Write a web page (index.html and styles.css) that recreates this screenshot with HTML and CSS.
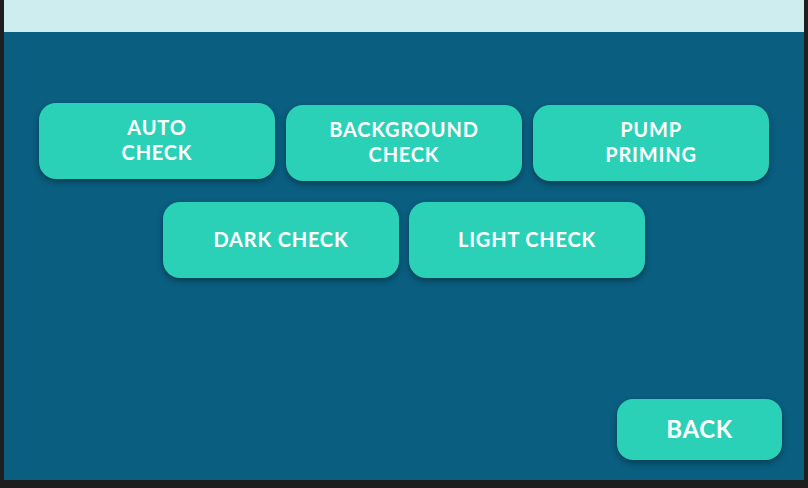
FILE: index.html
```html
<!DOCTYPE html>
<html>
<head>
<meta charset="utf-8">
<link rel="stylesheet" href="styles.css">
</head>
<body>
<div class="screen">
  <div class="topbar"></div>
  <div class="main">
    <div class="row row-top">
      <button class="btn btn-raised">AUTO<br>CHECK</button>
      <button class="btn">BACKGROUND<br>CHECK</button>
      <button class="btn">PUMP<br>PRIMING</button>
    </div>
    <div class="row row-second">
      <button class="btn">DARK CHECK</button>
      <button class="btn">LIGHT CHECK</button>
    </div>
    <div class="footer">
      <button class="btn btn-back">BACK</button>
    </div>
  </div>
</div>
</body>
</html>
```
FILE: styles.css
```css
html, body {
  margin: 0;
  padding: 0;
  background: #1e1e1e;
  width: 808px;
  height: 488px;
  overflow: hidden;
}
.screen {
  margin-left: 4px;
  width: 800px;
  height: 480px;
  display: flex;
  flex-direction: column;
}
.topbar {
  height: 32px;
  background: #ceedef;
}
.main {
  flex: 1;
  background: #0a5e80;
  display: flex;
  flex-direction: column;
  padding-top: 71px;
}
.row {
  display: flex;
  justify-content: center;
  align-items: flex-end;
}
.row-top {
  gap: 11px;
}
.row-second {
  gap: 10px;
  margin-top: 21px;
}
.btn {
  width: 236px;
  height: 76px;
  border: none;
  border-radius: 17px;
  background: #2bd1b7;
  color: #ffffff;
  font-family: Lato, "Open Sans", sans-serif;
  font-weight: 700;
  font-size: 20px;
  line-height: 25px;
  letter-spacing: 0.8px;
  box-shadow: 0 3px 6px rgba(0, 0, 0, 0.35);
  padding: 0 0 2px 0;
  text-align: center;
}
.btn-raised {
  margin-bottom: 2px;
}
.footer {
  margin-top: auto;
  display: flex;
  justify-content: flex-end;
  padding: 0 22px 20px 0;
}
.btn-back {
  width: 165px;
  height: 61px;
  border-radius: 16px;
  font-size: 24px;
  letter-spacing: 0.6px;
}
```
